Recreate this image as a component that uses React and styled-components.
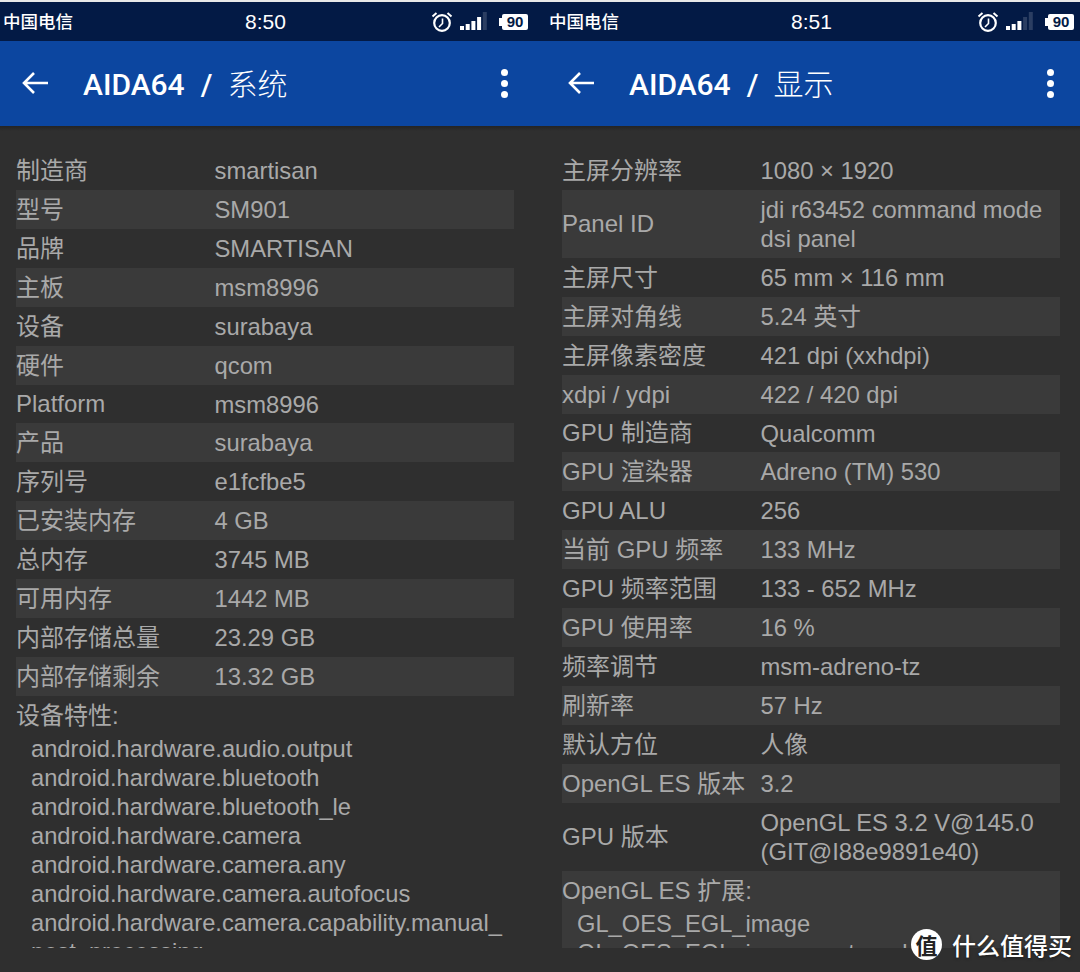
import React from "react";
import styled, { createGlobalStyle } from "styled-components";

const systemRows = [
    ["制造商", "smartisan"],
    ["型号", "SM901"],
    ["品牌", "SMARTISAN"],
    ["主板", "msm8996"],
    ["设备", "surabaya"],
    ["硬件", "qcom"],
    ["Platform", "msm8996"],
    ["产品", "surabaya"],
    ["序列号", "e1fcfbe5"],
    ["已安装内存", "4 GB"],
    ["总内存", "3745 MB"],
    ["可用内存", "1442 MB"],
    ["内部存储总量", "23.29 GB"],
    ["内部存储剩余", "13.32 GB"],
];

const systemFeatures = [
    "android.hardware.audio.output",
    "android.hardware.bluetooth",
    "android.hardware.bluetooth_le",
    "android.hardware.camera",
    "android.hardware.camera.any",
    "android.hardware.camera.autofocus",
    "android.hardware.camera.capability.manual_",
    "post_processing",
];

const displayRows = [
    ["主屏分辨率", "1080 × 1920"],
    ["Panel ID", "jdi r63452 command mode dsi panel"],
    ["主屏尺寸", "65 mm × 116 mm"],
    ["主屏对角线", "5.24 英寸"],
    ["主屏像素密度", "421 dpi (xxhdpi)"],
    ["xdpi / ydpi", "422 / 420 dpi"],
    ["GPU 制造商", "Qualcomm"],
    ["GPU 渲染器", "Adreno (TM) 530"],
    ["GPU ALU", "256"],
    ["当前 GPU 频率", "133 MHz"],
    ["GPU 频率范围", "133 - 652 MHz"],
    ["GPU 使用率", "16 %"],
    ["频率调节", "msm-adreno-tz"],
    ["刷新率", "57 Hz"],
    ["默认方位", "人像"],
    ["OpenGL ES 版本", "3.2"],
    ["GPU 版本", "OpenGL ES 3.2 V@145.0 (GIT@I88e9891e40)"],
];

const displayExtensions = ["GL_OES_EGL_image", "GL_OES_EGL_image_external"];

const barHeights = [4, 6, 9, 13, 18];

function StatusIcons({ bars }) {
    return (
        <IconRow>
            <svg width="22" height="22" viewBox="0 0 22 22" fill="none" stroke="#fff">
                <circle cx="11" cy="12" r="7.8" strokeWidth="2.2" />
                <path d="M11.5 7.5V12.5L8 16" strokeWidth="1.6" />
                <path d="M1.5 5.5L5.5 2M20.5 5.5L16.5 2" strokeWidth="2" />
            </svg>
            <svg width="28" height="19" viewBox="0 0 28 19" fill="#fff">
                {barHeights.map((h, i) => (
                    <rect
                        key={i}
                        x={i * 5.7}
                        y={18 - h}
                        width="4"
                        height={h}
                        opacity={i < bars ? 1 : 0.16}
                    />
                ))}
            </svg>
            <Battery>90</Battery>
        </IconRow>
    );
}

function Phone({ inset, time, section, bars, rows, listLabel, list, listBanded }) {
    return (
        <Panel>
            <StatusBar $inset={inset}>
                <Carrier>中国电信</Carrier>
                <Clock>{time}</Clock>
                <StatusIcons bars={bars} />
            </StatusBar>
            <AppBar $inset={inset}>
                <svg width="28" height="24" viewBox="0 0 28 24" fill="none" stroke="#fff" strokeWidth="2.6">
                    <path d="M27 11H3M13 1L3 11L13 21" />
                </svg>
                <Title>
                    AIDA64<Slash>/</Slash>
                    <Section>{section}</Section>
                </Title>
                <MenuDots>
                    <i />
                    <i />
                    <i />
                </MenuDots>
            </AppBar>
            <Content $inset={inset}>
                <Table>
                    {rows.map(([label, value], i) => (
                        <Row key={label} $banded={i % 2 === 1}>
                            <Label>{label}</Label>
                            <Value>{value}</Value>
                        </Row>
                    ))}
                    <ListBlock $banded={listBanded}>
                        <ListLabel>{listLabel}</ListLabel>
                        {list.map((item) => (
                            <ListItem key={item}>{item}</ListItem>
                        ))}
                    </ListBlock>
                </Table>
            </Content>
        </Panel>
    );
}

export default function App() {
    return (
        <>
            <GlobalStyle />
            <Page>
                <Phone
                    inset={0}
                    time="8:50"
                    section="系统"
                    bars={4}
                    rows={systemRows}
                    listLabel="设备特性:"
                    list={systemFeatures}
                />
                <Phone
                    inset={6}
                    time="8:51"
                    section="显示"
                    bars={3}
                    rows={displayRows}
                    listLabel="OpenGL ES 扩展:"
                    list={displayExtensions}
                    listBanded
                />
                <Watermark>
                    <WatermarkBadge>值</WatermarkBadge>
                    什么值得买
                </Watermark>
            </Page>
        </>
    );
}

const GlobalStyle = createGlobalStyle`
    html, body {
        margin: 0;
        padding: 0;
        background: #2f2f2f;
    }
`;

const fontStack = `"Liberation Sans", "Noto Sans CJK SC", sans-serif`;

const Page = styled.div`
    position: relative;
    width: 1080px;
    height: 972px;
    display: flex;
    overflow: hidden;
    border-top: 2px solid #e8e8e8;
    box-sizing: border-box;
    font-family: ${fontStack};
`;

const Panel = styled.div`
    width: 540px;
    display: flex;
    flex-direction: column;
    background: #2f2f2f;
`;

const StatusBar = styled.div`
    height: 39px;
    flex-shrink: 0;
    display: grid;
    grid-template-columns: 1fr auto 1fr;
    align-items: center;
    padding: 0 ${(p) => 12 - p.$inset}px 0 ${(p) => 3 + p.$inset}px;
    background: #031a45;
    color: #fff;
`;

const Carrier = styled.span`
    font-size: 17.5px;
    font-weight: 500;
    margin-top: -2px;
`;

const Clock = styled.span`
    font-size: 21px;
    margin-top: 1px;
`;

const IconRow = styled.div`
    justify-self: end;
    display: flex;
    align-items: center;
    gap: 7px;
`;

const Battery = styled.span`
    position: relative;
    width: 26px;
    height: 16px;
    margin-left: 7px;
    background: #fff;
    border-radius: 2px;
    color: #031a45;
    font-size: 15px;
    font-weight: 700;
    line-height: 16px;
    text-align: center;

    &::before {
        content: "";
        position: absolute;
        left: -3px;
        top: 4px;
        width: 3px;
        height: 8px;
        background: #fff;
    }
`;

const AppBar = styled.div`
    height: 85px;
    flex-shrink: 0;
    display: flex;
    align-items: center;
    padding: 0 ${(p) => 32 - p.$inset}px 0 ${(p) => 21 + p.$inset}px;
    background: #0c46a0;
    color: #fff;
`;

const Title = styled.div`
    flex: 1;
    margin: -4px 0 0 34px;
    font-family: Roboto, "Noto Sans CJK SC", sans-serif;
    font-size: 30px;
    font-weight: 500;
    white-space: nowrap;
`;

const Slash = styled.span`
    margin: 0 15px 0 16px;
`;

const Section = styled.span`
    font-weight: 300;
    font-size: 30px;
`;

const MenuDots = styled.div`
    display: flex;
    flex-direction: column;
    gap: 4px;

    i {
        width: 7px;
        height: 7px;
        border-radius: 50%;
        background: #fff;
    }
`;

const Content = styled.div`
    flex: 1;
    min-height: 0;
    padding: 25px ${(p) => 26 - p.$inset}px 0 ${(p) => 16 + p.$inset}px;
    background: linear-gradient(#242424, #2f2f2f 5px);
`;

const Table = styled.div`
    height: 797px;
    overflow: hidden;
    color: #a9a9a9;
    font-size: 24px;
`;

const Row = styled.div`
    display: grid;
    grid-template-columns: 198px 1fr;
    align-items: center;
    min-height: 38.93px;
    line-height: 29px;
    background: ${(p) => (p.$banded ? "#3a3a3a" : "transparent")};
`;

const Label = styled.div`
    white-space: nowrap;
`;

const Value = styled.div`
    font-size: 23.8px;
    padding: 5px 0 4.9px 0.5px;
`;

const ListBlock = styled.div`
    background: ${(p) => (p.$banded ? "#3a3a3a" : "transparent")};
    min-height: 120px;
`;

const ListLabel = styled.div`
    line-height: 39px;
`;

const ListItem = styled.div`
    padding-left: 15px;
    line-height: 29px;
    font-size: 23.7px;
    white-space: nowrap;
`;

const Watermark = styled.div`
    position: absolute;
    right: 8px;
    bottom: 10px;
    display: flex;
    align-items: center;
    gap: 10px;
    color: #fff;
    font-size: 24px;
    font-weight: 500;
    font-family: "Noto Sans CJK SC", sans-serif;
    text-shadow: 0 1px 3px rgba(0, 0, 0, 0.5);
`;

const WatermarkBadge = styled.span`
    width: 31px;
    height: 31px;
    border-radius: 50%;
    background: #fff;
    color: #222;
    font-size: 22px;
    line-height: 31px;
    text-align: center;
    font-weight: 700;
    text-shadow: none;
`;
